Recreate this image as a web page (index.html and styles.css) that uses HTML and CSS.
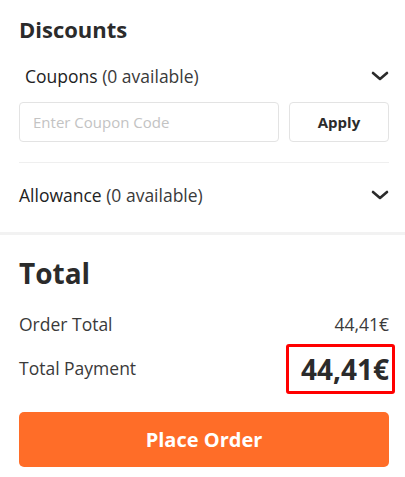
FILE: index.html
```html
<!DOCTYPE html>
<html lang="en">
<head>
<meta charset="utf-8">
<title>Checkout</title>
<link rel="stylesheet" href="styles.css">
</head>
<body>
<section class="discounts">
  <h2 class="title">Discounts</h2>
  <div class="row coupons">
    <span class="label"><span class="name">Coupons</span> (0 available)</span>
    <svg class="chev" width="18" height="10" viewBox="0 0 18 10"><polyline points="2,2 9,8 16,2" fill="none" stroke="#2b2b2b" stroke-width="2.6" stroke-linecap="round" stroke-linejoin="round"/></svg>
  </div>
  <div class="coupon-form">
    <input class="coupon-input" type="text" placeholder="Enter Coupon Code">
    <button class="apply">Apply</button>
  </div>
  <div class="sep"></div>
  <div class="row allowance">
    <span class="label"><span class="name">Allowance</span> (0 available)</span>
    <svg class="chev" width="18" height="10" viewBox="0 0 18 10"><polyline points="2,2 9,8 16,2" fill="none" stroke="#2b2b2b" stroke-width="2.6" stroke-linecap="round" stroke-linejoin="round"/></svg>
  </div>
</section>
<div class="band"></div>
<section class="total">
  <h2 class="total-title">Total</h2>
  <div class="line order">
    <span>Order Total</span>
    <span>44,41€</span>
  </div>
  <div class="line pay">
    <span class="pay-label">Total Payment</span>
    <span class="amount">44,41€</span>
  </div>
  <button class="place">Place Order</button>
</section>
</body>
</html>
```
FILE: styles.css
```css
* { box-sizing: border-box; }
html, body { margin: 0; padding: 0; background: #fff; }
body {
  font-family: "Open Sans", "Noto Sans", sans-serif;
  color: #333;
  width: 405px;
}
.discounts { padding: 0 16px 0 19px; }
.title {
  margin: 14px 0 0;
  font-size: 22px;
  line-height: 30px;
  font-weight: 700;
  color: #2b2b2b;
}
.row {
  display: flex;
  align-items: center;
  justify-content: space-between;
  font-size: 17.5px;
  line-height: 22px;
}
.row .name { color: #222; font-weight: 500; }
.row .label { color: #3a3a3a; }
.chev { display: block; }
.coupons { margin-top: 21px; padding-left: 6px; }
.coupon-form {
  display: flex;
  gap: 10px;
  margin-top: 15px;
}
.coupon-input {
  flex: 0 0 260px;
  height: 40px;
  border: 1px solid #e3e3e3;
  border-radius: 4px;
  padding: 0 0 0 13px;
  font-family: inherit;
  font-size: 15px;
  color: #333;
  outline: none;
}
.coupon-input::placeholder { color: #c3c3c3; }
.apply {
  flex: 1;
  height: 40px;
  border: 1px solid #e3e3e3;
  border-radius: 4px;
  background: #fff;
  font-family: inherit;
  font-size: 15px;
  font-weight: 700;
  color: #2b2b2b;
  padding: 0;
}
.sep {
  height: 1px;
  background: #efefef;
  margin-top: 20px;
}
.allowance { margin-top: 21px; }
.band {
  height: 3px;
  background: #f2f2f2;
  margin-top: 26px;
}
.total { padding: 0 16px 0 19px; }
.total-title {
  margin: 19px 0 0;
  font-size: 28px;
  line-height: 38px;
  font-weight: 700;
  color: #2b2b2b;
}
.line {
  display: flex;
  align-items: center;
  justify-content: space-between;
  font-size: 17.5px;
  line-height: 22px;
  color: #3a3a3a;
}
.order { margin-top: 21px; }
.pay { margin-top: 9px; }
.pay-label { padding-bottom: 3px; }
.amount {
  font-size: 28px;
  line-height: 38px;
  font-weight: 700;
  color: #2b2b2b;
  border: 3px solid #ff0000;
  border-radius: 3px;
  padding: 3px 3px 3px 12px;
  margin-right: -6px;
}
.place {
  display: block;
  width: 100%;
  height: 55px;
  margin-top: 18px;
  border: none;
  border-radius: 5px;
  background: #ff6d28;
  color: #fff;
  font-family: inherit;
  font-size: 20px;
  font-weight: 700;
  padding: 0;
}
```
